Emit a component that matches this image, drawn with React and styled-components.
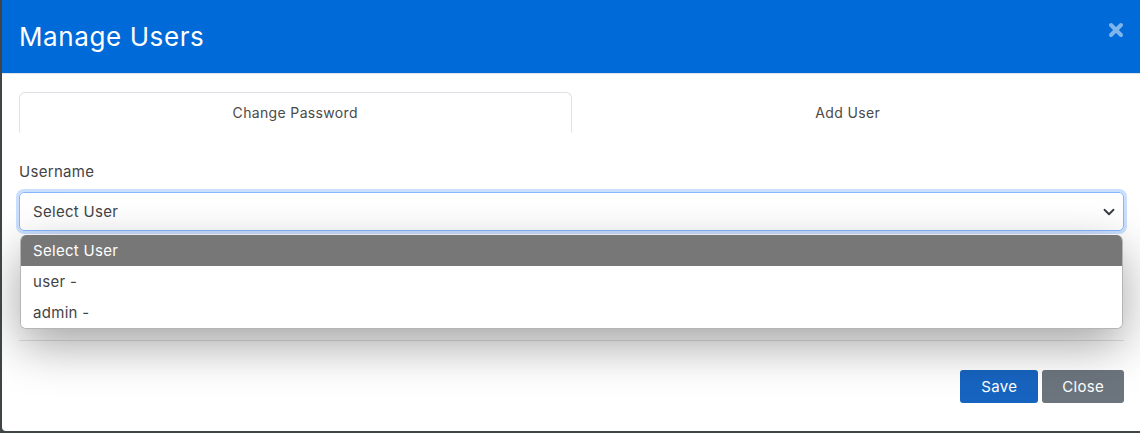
import styled, { createGlobalStyle } from 'styled-components';

const GlobalStyle = createGlobalStyle`
  body {
    margin: 0;
    background: #3f4447;
    font-family: Inter, "Noto Sans", "Liberation Sans", sans-serif;
  }
`;

const Modal = styled.div`
  margin-left: 2px;
  width: 1138px;
  height: 431px;
  background: #fff;
  border-bottom-left-radius: 4px;
  overflow: hidden;
  display: flex;
  flex-direction: column;
`;

const Header = styled.header`
  height: 74px;
  flex-shrink: 0;
  box-sizing: border-box;
  background: #006ad8;
  border-bottom: 1px solid #dee2e6;
  display: flex;
  align-items: center;
  justify-content: space-between;
  padding: 0 16px 0 17px;
`;

const Title = styled.h1`
  margin: 0;
  font-size: 26px;
  font-weight: 400;
  color: #fff;
  letter-spacing: 0.6px;
`;

const CloseX = styled.button`
  border: 0;
  padding: 0;
  background: transparent;
  width: 16px;
  height: 16px;
  margin-top: -14px;
  opacity: 0.5;
  cursor: pointer;
`;

const Body = styled.div`
  padding: 18px 16px 0 17px;
  flex: 1;
`;

const Tabs = styled.div`
  display: flex;
  height: 40px;
  border-bottom: 1px solid #dee2e6;
`;

const Tab = styled.div`
  flex: 1;
  display: flex;
  align-items: center;
  justify-content: center;
  font-size: 14px;
  color: #4a4a4a;
  letter-spacing: 0.35px;
  margin-bottom: -1px;
  border: 1px solid ${(p) => (p.$active ? '#dee2e6' : 'transparent')};
  border-bottom-color: ${(p) => (p.$active ? '#fff' : 'transparent')};
  border-radius: 6px 6px 0 0;
  background: #fff;
`;

const FormGroup = styled.div`
  position: relative;
  margin-top: 28px;
  height: 179px;
`;

const Label = styled.label`
  display: block;
  font-size: 15px;
  line-height: 22px;
  color: #444;
  letter-spacing: 0.3px;
  margin-bottom: 9px;
`;

const Select = styled.div`
  height: 39px;
  box-sizing: border-box;
  border: 1px solid #86b7fe;
  border-radius: 5px;
  box-shadow: 0 0 0 3px rgba(13, 110, 253, 0.22);
  display: flex;
  align-items: center;
  justify-content: space-between;
  padding: 0 8px 0 13px;
  font-size: 15px;
  color: #444;
  letter-spacing: 0.3px;
`;

const Options = styled.ul`
  position: absolute;
  top: 74px;
  left: 1px;
  right: 1px;
  margin: 0;
  padding: 0;
  list-style: none;
  background: #fff;
  border: 1px solid #b5b5b5;
  border-top: 0;
  border-radius: 6px;
  overflow: hidden;
  box-shadow: 0 16px 48px rgba(0, 0, 0, 0.36);
  z-index: 2;
`;

const Option = styled.li`
  height: 31px;
  display: flex;
  align-items: center;
  padding-left: 12px;
  font-size: 15px;
  letter-spacing: 0.3px;
  color: ${(p) => (p.$selected ? '#fff' : '#444')};
  background: ${(p) => (p.$selected ? '#777777' : '#fff')};
`;

const Footer = styled.div`
  border-top: 1px solid #dee2e6;
  display: flex;
  justify-content: flex-end;
  gap: 4px;
  padding-top: 29px;
`;

const Button = styled.button`
  height: 33px;
  padding: 0 ${(p) => p.$px}px;
  border: 0;
  border-radius: 3px;
  font-family: inherit;
  font-size: 15px;
  letter-spacing: 0.3px;
  color: #fff;
  background: ${(p) => p.$bg};
`;

export default function App() {
  return (
    <>
      <GlobalStyle />
      <Modal>
        <Header>
          <Title>Manage Users</Title>
          <CloseX aria-label="close">
            <svg width="16" height="16" viewBox="0 0 16 16">
              <path d="M3 3 L13 13 M13 3 L3 13" stroke="#fff" strokeWidth="4" strokeLinecap="round" />
            </svg>
          </CloseX>
        </Header>
        <Body>
          <Tabs>
            <Tab $active>Change Password</Tab>
            <Tab>Add User</Tab>
          </Tabs>
          <FormGroup>
            <Label>Username</Label>
            <Select>
              <span>Select User</span>
              <svg width="12" height="12" viewBox="0 0 16 16">
                <path d="M2 5 L8 11 L14 5" fill="none" stroke="#343a40" strokeWidth="2.4" strokeLinecap="round" strokeLinejoin="round" />
              </svg>
            </Select>
            <Options>
              <Option $selected>Select User</Option>
              <Option>user -</Option>
              <Option>admin -</Option>
            </Options>
          </FormGroup>
          <Footer>
            <Button $bg="#1764c0" $px={21}>Save</Button>
            <Button $bg="#6c757d" $px={20}>Close</Button>
          </Footer>
        </Body>
      </Modal>
    </>
  );
}
